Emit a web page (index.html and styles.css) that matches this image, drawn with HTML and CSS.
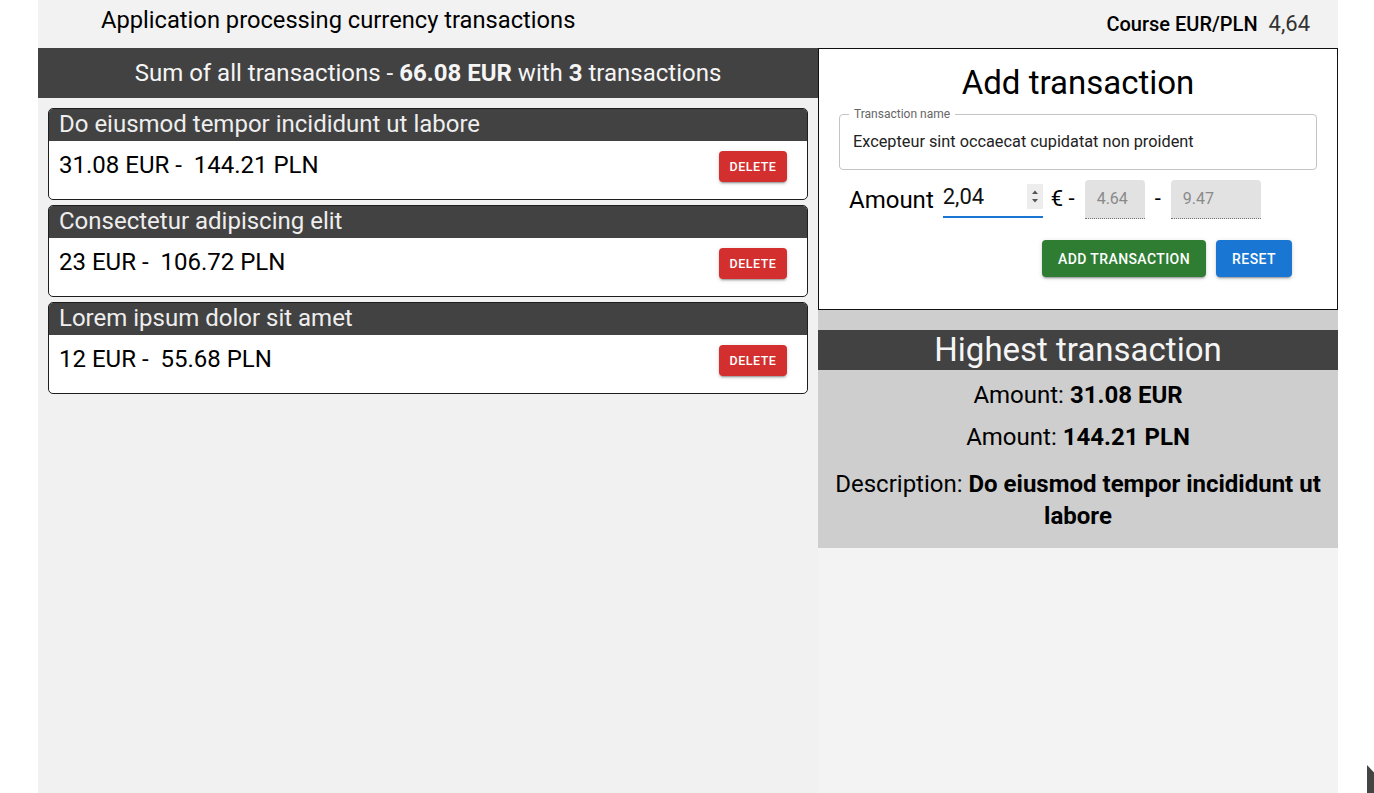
FILE: index.html
```html
<!DOCTYPE html>
<html lang="en">
<head>
<meta charset="utf-8">
<title>Currency transactions</title>
<link rel="stylesheet" href="styles.css">
</head>
<body>
<div class="app">
  <header class="topbar">
    <h1 class="app-title">Application processing currency transactions</h1>
    <div class="course"><span class="course-label">Course EUR/PLN</span><span class="course-value">4,64</span></div>
  </header>
  <main class="columns">
    <section class="left">
      <div class="sum-bar">Sum of all transactions - <b>66.08 EUR</b> with <b>3</b> transactions</div>
      <div class="list">
        <div class="item">
          <div class="item-head">Do eiusmod tempor incididunt ut labore</div>
          <div class="item-body"><span class="item-amount">31.08 EUR -&nbsp; 144.21 PLN</span><button class="btn-del">DELETE</button></div>
        </div>
        <div class="item">
          <div class="item-head">Consectetur adipiscing elit</div>
          <div class="item-body"><span class="item-amount">23 EUR -&nbsp; 106.72 PLN</span><button class="btn-del">DELETE</button></div>
        </div>
        <div class="item">
          <div class="item-head">Lorem ipsum dolor sit amet</div>
          <div class="item-body"><span class="item-amount">12 EUR -&nbsp; 55.68 PLN</span><button class="btn-del">DELETE</button></div>
        </div>
      </div>
    </section>
    <section class="right">
      <form class="add-form">
        <h2 class="form-title">Add transaction</h2>
        <div class="outlined">
          <span class="outlined-label">Transaction name</span>
          <div class="outlined-value">Excepteur sint occaecat cupidatat non proident</div>
        </div>
        <div class="amount-row">
          <span class="amount-label">Amount</span>
          <div class="num-input">
            <span class="num-value">2,04</span>
            <span class="spinner">
              <svg width="16" height="25" viewBox="0 0 16 25"><path d="M5 10 L8 6.5 L11 10 Z" fill="#555"/><path d="M5 15 L8 18.5 L11 15 Z" fill="#555"/></svg>
            </span>
          </div>
          <span class="sep">€ -</span>
          <div class="dis-input w60">4.64</div>
          <span class="sep dash">-</span>
          <div class="dis-input w90">9.47</div>
        </div>
        <div class="actions">
          <button type="button" class="btn btn-green">ADD TRANSACTION</button>
          <button type="button" class="btn btn-blue">RESET</button>
        </div>
      </form>
      <div class="highest">
        <div class="highest-bar">Highest transaction</div>
        <p class="hl hl1">Amount: <b>31.08 EUR</b></p>
        <p class="hl hl2">Amount: <b>144.21 PLN</b></p>
        <p class="hl hl3">Description: <b>Do eiusmod tempor incididunt ut labore</b></p>
      </div>
    </section>
  </main>
</div>
<div class="cursor-mark"></div>
</body>
</html>
```
FILE: styles.css
```css
* { box-sizing: border-box; }
html, body { margin: 0; padding: 0; background: #ffffff; }
body {
  font-family: Roboto, "Liberation Sans", Arial, sans-serif;
  color: #000;
  height: 793px;
  overflow: hidden;
}
.app {
  width: 1300px;
  margin-left: 38px;
  height: 793px;
  display: flex;
  flex-direction: column;
}
.topbar {
  height: 48px;
  background: #f2f2f2;
  display: flex;
  justify-content: space-between;
  align-items: flex-start;
  padding: 0 28px 0 63px;
}
.app-title {
  margin: 0;
  font-size: 23.7px;
  font-weight: 400;
  line-height: 28px;
  padding-top: 6px;
}
.course {
  display: flex;
  align-items: baseline;
  padding-top: 11px;
}
.course-label {
  font-size: 20px;
  font-weight: 500;
}
.course-value {
  font-size: 22px;
  color: #333;
  margin-left: 11px;
}
.columns {
  flex: 1;
  display: flex;
}
.left {
  width: 780px;
  background: #f1f1f1;
}
.sum-bar {
  height: 50px;
  background: #424242;
  color: #f5f5f5;
  font-size: 24px;
  line-height: 50px;
  text-align: center;
}
.list {
  padding: 10px;
  display: flex;
  flex-direction: column;
  gap: 5px;
}
.item {
  border: 1px solid #1e1e1e;
  border-radius: 5px;
  background: #fff;
  overflow: hidden;
}
.item-head {
  height: 32px;
  background: #424242;
  color: #eeeeee;
  font-size: 24px;
  line-height: 31px;
  padding-left: 10px;
}
.item-body {
  height: 58px;
  display: flex;
  justify-content: space-between;
  align-items: flex-start;
  padding: 9px 20px 0 10px;
}
.item-amount {
  font-size: 24px;
  line-height: 31px;
}
.btn-del {
  margin-top: 1px;
  height: 31px;
  width: 68px;
  border: 0;
  border-radius: 4px;
  background: #d32f2f;
  color: #fff;
  font-family: Roboto, sans-serif;
  font-size: 12.5px;
  font-weight: 500;
  letter-spacing: 0.5px;
  box-shadow: 0 3px 1px -2px rgba(0,0,0,0.2), 0 2px 2px 0 rgba(0,0,0,0.14), 0 1px 5px 0 rgba(0,0,0,0.12);
  padding: 0;
}
.right {
  width: 520px;
  background: #f3f3f3;
}
.add-form {
  height: 262px;
  border: 1px solid #111;
  background: #fff;
  padding: 10px 20px 0 20px;
  margin: 0;
}
.form-title {
  margin: 0;
  font-size: 33px;
  font-weight: 400;
  line-height: 48px;
  text-align: center;
}
.outlined {
  position: relative;
  margin-top: 7px;
  height: 56px;
  border: 1px solid #c4c4c4;
  border-radius: 4px;
  padding: 0 13px;
}
.outlined-label {
  position: absolute;
  left: 9px;
  top: -8px;
  padding: 0 5px;
  background: #fff;
  font-size: 12px;
  line-height: 14px;
  color: #666;
}
.outlined-value {
  font-size: 16.3px;
  line-height: 54px;
  color: #222;
}
.amount-row {
  margin-top: 10px;
  height: 39px;
  display: flex;
  align-items: flex-start;
  padding-left: 10px;
}
.amount-label {
  font-size: 24px;
  line-height: 38px;
  margin-top: 1px;
}
.num-input {
  position: relative;
  margin-left: 9px;
  width: 100px;
  height: 38px;
  border-bottom: 2px solid #1976d2;
}
.num-value {
  font-size: 22px;
  line-height: 34px;
  color: #111;
}
.spinner {
  position: absolute;
  right: 0;
  top: 4px;
  width: 16px;
  height: 25px;
  background: #ededed;
  display: block;
}
.spinner svg { display: block; }
.sep {
  font-size: 22px;
  line-height: 38px;
  margin-left: 8px;
  margin-right: 10px;
}
.sep.dash {
  margin-left: 10px;
}
.dis-input {
  height: 39px;
  background: #e2e2e2;
  border-radius: 4px 4px 0 0;
  border-bottom: 1px dotted #777;
  color: #8a8a8a;
  font-size: 16px;
  line-height: 38px;
  padding-left: 12px;
}
.w60 { width: 60px; }
.w90 { width: 90px; }
.actions {
  margin-top: 21px;
  display: flex;
  justify-content: flex-end;
  gap: 10px;
  padding-right: 25px;
}
.btn {
  height: 37px;
  border: 0;
  border-radius: 4px;
  color: #fff;
  font-family: Roboto, sans-serif;
  font-size: 14px;
  font-weight: 500;
  letter-spacing: 0.4px;
  padding: 0 16px;
  box-shadow: 0 3px 1px -2px rgba(0,0,0,0.2), 0 2px 2px 0 rgba(0,0,0,0.14), 0 1px 5px 0 rgba(0,0,0,0.12);
}
.btn-green { background: #2e7d32; width: 164px; }
.btn-blue { background: #1976d2; width: 76px; }
.highest {
  background: #cecece;
  padding: 20px 10px 16px;
  text-align: center;
}
.highest-bar {
  margin: 0 -10px;
  height: 40px;
  background: #424242;
  color: #f5f5f5;
  font-size: 33px;
  line-height: 40px;
}
.hl {
  margin: 0;
  font-size: 24px;
}
.hl b { font-weight: 700; }
.hl1 { margin-top: 12px; line-height: 26px; }
.hl2 { margin-top: 16px; line-height: 26px; }
.hl3 { margin-top: 18px; line-height: 32px; }
.cursor-mark {
  position: absolute;
  left: 1367px;
  top: 765px;
  width: 8px;
  height: 28px;
  background: #444;
  clip-path: polygon(0 0, 100% 30%, 100% 100%, 0 100%);
}
```
